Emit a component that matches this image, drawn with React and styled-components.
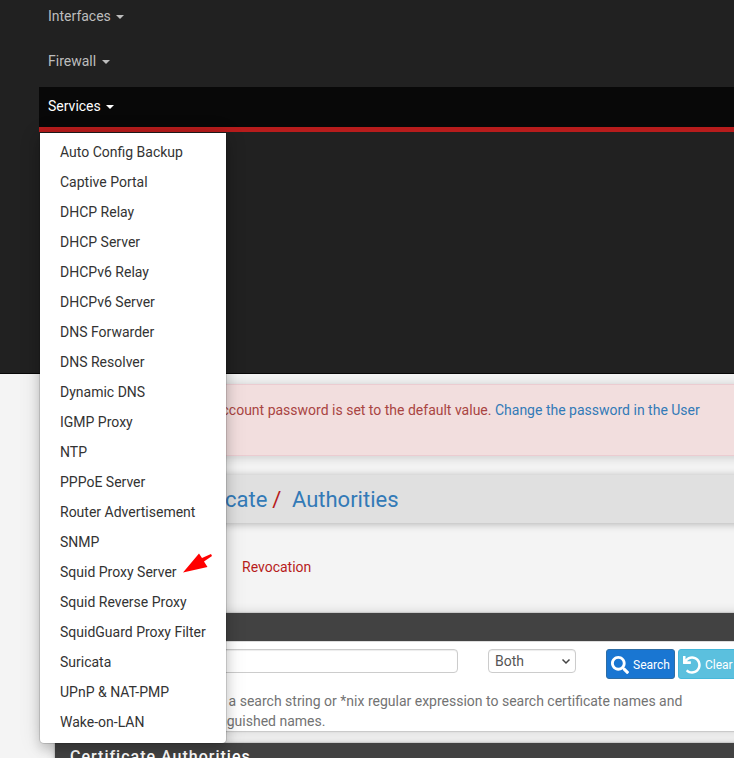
import React from "react";
import styled, { createGlobalStyle, css } from "styled-components";
import { FaSearch, FaUndo } from "react-icons/fa";

const GlobalStyle = createGlobalStyle`
  *, *::before, *::after { box-sizing: border-box; }
  body {
    margin: 0;
    background: #f4f4f4;
    color: #333;
    font: 14px/20px Roboto, sans-serif;
  }
`;

const Page = styled.div`
  position: relative;
  height: 758px;
  overflow: hidden;
`;

const Navbar = styled.header`
  display: flow-root;
  height: 374px;
  padding: 0 0 0 39px;
  background: #212121;
  border-bottom: 1px solid #080808;
`;

const NavItem = styled.div`
  display: flex;
  align-items: center;
  height: 45px;
  padding: 0 0 3px 9px;
  margin-top: ${(p) => (p.$first ? "-5px" : 0)};
  color: #bdbdbd;

  ${(p) =>
    p.$active &&
    css`
      margin-top: 2px;
      padding-bottom: 2px;
      color: #fff;
      background: #080808;
      border-bottom: 5px solid #b71c1c;
    `}
`;

const Caret = styled.span`
  margin: 1px 0 0 5.4px;
  border: 4px solid transparent;
  border-top-color: currentColor;
  border-bottom-width: 0;
`;

const Menu = styled.ul`
  position: absolute;
  z-index: 2;
  top: 133px;
  left: 40px;
  width: 186px;
  height: 610px;
  margin: 0;
  padding: 4px 0;
  list-style: none;
  background: #fff;
  border-radius: 0 0 4px 4px;
  box-shadow: 0 0 0 1px rgba(0, 0, 0, 0.12), 0 6px 12px rgba(0, 0, 0, 0.175),
    0 2px 22px rgba(0, 0, 0, 0.13);
`;

const MenuItem = styled.li`
  height: 30px;
  padding: 5px 20px;
  color: #333;
  white-space: nowrap;
`;

const Pointer = styled.svg`
  position: absolute;
  z-index: 3;
  left: 183px;
  top: 553px;
`;

const Content = styled.main`
  width: 724px;
  margin-left: 55px;
  padding-top: 10px;
  white-space: nowrap;
`;

const Alert = styled.div`
  height: 72px;
  padding: 15px 0 0 165.5px;
  color: #a94442;
  background: #f2dede;
  border: 1px solid #ebccd1;
  box-shadow: 0 1px 10px rgba(0, 0, 0, 0.18);
`;

const Link = styled.a`
  color: #337ab7;
`;

const Breadcrumb = styled.div`
  display: flex;
  height: 48px;
  margin-top: 19px;
  padding-left: 170px;
  font-size: 22px;
  line-height: 49px;
  color: #b71c1c;
  background: #e0e0e0;
  box-shadow: 0 1px 8px rgba(0, 0, 0, 0.28);
`;

const Separator = styled.span`
  margin: 0 10.5px 0 5px;
`;

const Tabs = styled.nav`
  height: 90px;
  padding: 34px 0 0 187px;
  color: #b71c1c;
`;

const Panel = styled.section`
  background: #fff;
  box-shadow: 0 0 10px rgba(0, 0, 0, 0.16), 0 0 1px 1px rgba(0, 0, 0, 0.1);
`;

const PanelHeading = styled.h2`
  height: 29px;
  margin: 0;
  padding: 4px 0 0 15px;
  font-size: 16px;
  font-weight: 500;
  line-height: 20px;
  letter-spacing: 1px;
  color: #fff;
  background: #424242;
  border-bottom: 1px solid #ddd;
`;

const PanelBody = styled.div`
  height: 89px;
  padding: 7px 0 0 50px;
`;

const Fields = styled.div`
  display: flex;
  align-items: flex-start;
`;

const control = css`
  height: 24px;
  background: #fff;
  border: 1px solid #ccc;
  border-radius: 4px;
  box-shadow: inset 0 1px 1px rgba(0, 0, 0, 0.075);
`;

const SearchInput = styled.input`
  ${control}
  width: 353px;
  outline: none;
`;

const SelectBox = styled.div`
  ${control}
  display: flex;
  align-items: center;
  justify-content: space-between;
  width: 88px;
  margin: 0 30px;
  padding: 0 4px 1px 6px;
  color: #555;
`;

const Button = styled.button`
  display: flex;
  align-items: center;
  flex: none;
  width: ${(p) => (p.$info ? "68px" : "69px")};
  height: 30px;
  padding: 1px 0 0 4px;
  margin-right: 3px;
  gap: 4px;
  font: 12px/18px Roboto, sans-serif;
  color: #fff;
  background: ${(p) => (p.$info ? "#5bc0de" : "#1976d2")};
  border: 1px solid ${(p) => (p.$info ? "#46b8da" : "#2e6da4")};
  border-radius: 3px;
`;

const Help = styled.p`
  margin: 12px 0 0;
  padding-left: 114px;
  color: #737373;
`;

const HelpLine = styled.span`
  display: block;
  margin-left: ${(p) => p.$shift || 0}px;
`;

const Authorities = styled(Panel)`
  margin-top: 12px;
`;

const services = [
  "Auto Config Backup",
  "Captive Portal",
  "DHCP Relay",
  "DHCP Server",
  "DHCPv6 Relay",
  "DHCPv6 Server",
  "DNS Forwarder",
  "DNS Resolver",
  "Dynamic DNS",
  "IGMP Proxy",
  "NTP",
  "PPPoE Server",
  "Router Advertisement",
  "SNMP",
  "Squid Proxy Server",
  "Squid Reverse Proxy",
  "SquidGuard Proxy Filter",
  "Suricata",
  "UPnP & NAT-PMP",
  "Wake-on-LAN",
];

export default function App() {
  return (
    <Page>
      <GlobalStyle />
      <Navbar>
        <NavItem $first>
          Interfaces <Caret />
        </NavItem>
        <NavItem>
          Firewall <Caret />
        </NavItem>
        <NavItem $active>
          Services <Caret />
        </NavItem>
      </Navbar>
      <Menu>
        {services.map((name) => (
          <MenuItem key={name}>{name}</MenuItem>
        ))}
      </Menu>
      <Pointer width="30" height="22" viewBox="0 0 30 22">
        <path d="M0 19.5 16 0.5 19 5 28 1 29 3 21 8.5 24.5 14Z" fill="#f00" />
      </Pointer>
      <Content>
        <Alert>
          ccount password is set to the default value.{" "}
          <Link>Change the password in the User</Link>
        </Alert>
        <Breadcrumb>
          <Link>cate</Link>
          <Separator>/</Separator>
          <Link>Authorities</Link>
        </Breadcrumb>
        <Tabs>Revocation</Tabs>
        <Panel>
          <PanelHeading />
          <PanelBody>
            <Fields>
              <SearchInput />
              <SelectBox>
                Both
                <svg width="10" height="10" viewBox="0 0 10 10">
                  <path
                    d="M1.5 3.5 5 7 8.5 3.5"
                    fill="none"
                    stroke="#444"
                    strokeWidth="1.5"
                  />
                </svg>
              </SelectBox>
              <Button>
                <FaSearch size={18} />
                Search
              </Button>
              <Button $info>
                <FaUndo size={18} />
                Clear
              </Button>
            </Fields>
            <Help>
              <HelpLine $shift={9.6}>
                a search string or *nix regular expression to search certificate
                names and
              </HelpLine>
              <HelpLine>nguished names.</HelpLine>
            </Help>
          </PanelBody>
        </Panel>
        <Authorities>
          <PanelHeading>Certificate Authorities</PanelHeading>
        </Authorities>
      </Content>
    </Page>
  );
}
